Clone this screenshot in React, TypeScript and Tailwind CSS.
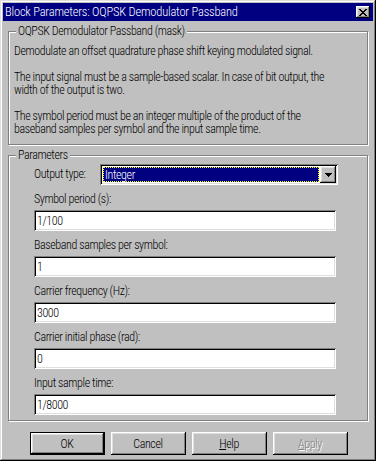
const raised =
  "shadow-[inset_-1px_-1px_#000,inset_1px_1px_#fff,inset_-2px_-2px_#808080,inset_2px_2px_#dfdfdf]";
const sunken =
  "shadow-[inset_1px_1px_#808080,inset_-1px_-1px_#fff,inset_2px_2px_#000,inset_-2px_-2px_#dfdfdf]";

const GroupBox = ({ label, className, children }: { label: string; className: string; children: React.ReactNode }) => (
  <div className={"relative mx-[5px] border border-[#808080] shadow-[1px_1px_#fff,inset_1px_1px_#fff] " + className}>
    <span className="absolute -top-[7px] left-[7px] bg-[#c0c0c0] px-[2px] leading-[13px] whitespace-nowrap">{label}</span>
    {children}
  </div>
);

const Field = ({ label, value }: { label: string; value: string }) => (
  <div className="mt-[8px]">
    <div className="leading-[13px] h-[13px]">{label}</div>
    <div className={"mt-[4px] w-[302px] h-[21px] bg-white pl-[3px] flex items-center " + sunken}>{value}</div>
  </div>
);

const Button = ({ children, isDefault, disabled }: { children: React.ReactNode; isDefault?: boolean; disabled?: boolean }) => (
  <div className={"w-[75px] h-[23px] bg-[#c0c0c0] " + (isDefault ? "border border-black" : "")}>
    <div
      className={
        "w-full h-full flex items-center justify-center " +
        raised +
        (disabled ? " text-[#808080] [text-shadow:1px_1px_#fff]" : " text-black")
      }
    >
      {children}
    </div>
  </div>
);

export default function App() {
  return (
    <div className="w-[376px] h-[461px] bg-[#c0c0c0] font-['Roboto_Condensed','Liberation_Sans',sans-serif] font-light text-[12px] tracking-[-0.4px] text-black">
      <div className="w-full h-full p-[3px] flex flex-col shadow-[inset_-1px_-1px_#000,inset_1px_1px_#dfdfdf,inset_-2px_-2px_#808080,inset_2px_2px_#fff]">
        {/* title bar */}
        <div className="h-[18px] bg-[#000080] flex items-center justify-between pl-[2px] pr-[3px]">
          <span className="text-white text-[12.5px] tracking-[-0.2px] leading-none">Block Parameters: OQPSK Demodulator Passband</span>
          <div className={"w-[14px] h-[12px] bg-[#c0c0c0] flex items-center justify-center " + raised}>
            <svg width="8" height="7" viewBox="0 0 8 7" shapeRendering="crispEdges">
              <path d="M0 0h2v1h1v1h2v-1h1v-1h2v1h-1v1h-1v1h-1v1h1v1h1v1h1v1h-2v-1h-1v-1h-2v1h-1v1h-2v-1h1v-1h1v-1h1v-1h-1v-1h-1z" fill="#000" />
            </svg>
          </div>
        </div>

        <GroupBox label="OQPSK Demodulator Passband (mask)" className="mt-[10px] h-[114px] pt-[13px] pl-[5px]">
          <div className="leading-[13px] whitespace-nowrap">
            <div>Demodulate an offset quadrature phase shift keying modulated signal.</div>
            <div className="h-[13px]" />
            <div>The input signal must be a sample-based scalar. In case of bit output, the</div>
            <div>width of the output is two.</div>
            <div className="h-[13px]" />
            <div>The symbol period must be an integer multiple of the product of the</div>
            <div>baseband samples per symbol and the input sample time.</div>
          </div>
        </GroupBox>

        <GroupBox label="Parameters" className="mt-[10px] h-[266px] pt-[8px] pl-[25px]">
          <div className="flex items-center h-[21px]">
            <span className="w-[66px] leading-[13px]">Output type:</span>
            <div className={"w-[238px] h-[21px] bg-white p-[2px] flex " + sunken}>
              <div className="flex-1 m-px bg-[#000080] border border-dotted border-[#ffff00] text-white flex items-center pl-[1px]">
                Integer
              </div>
              <div className={"w-[16px] h-[17px] bg-[#c0c0c0] flex items-center justify-center " + raised}>
                <svg width="7" height="4" viewBox="0 0 7 4" shapeRendering="crispEdges">
                  <path d="M0 0h7v1h-1v1h-1v1h-1v1h-1v-1h-1v-1h-1v-1h-1z" fill="#000" />
                </svg>
              </div>
            </div>
          </div>
          <Field label="Symbol period (s):" value="1/100" />
          <Field label="Baseband samples per symbol:" value="1" />
          <Field label="Carrier frequency (Hz):" value="3000" />
          <Field label="Carrier initial phase (rad):" value="0" />
          <Field label="Input sample time:" value="1/8000" />
        </GroupBox>

        <div className="mt-[11px] flex justify-center gap-[6px] pl-[1px]">
          <Button isDefault>OK</Button>
          <Button>Cancel</Button>
          <Button>
            <span><span className="underline">H</span>elp</span>
          </Button>
          <Button disabled>
            <span><span className="underline">A</span>pply</span>
          </Button>
        </div>
      </div>
    </div>
  );
}
